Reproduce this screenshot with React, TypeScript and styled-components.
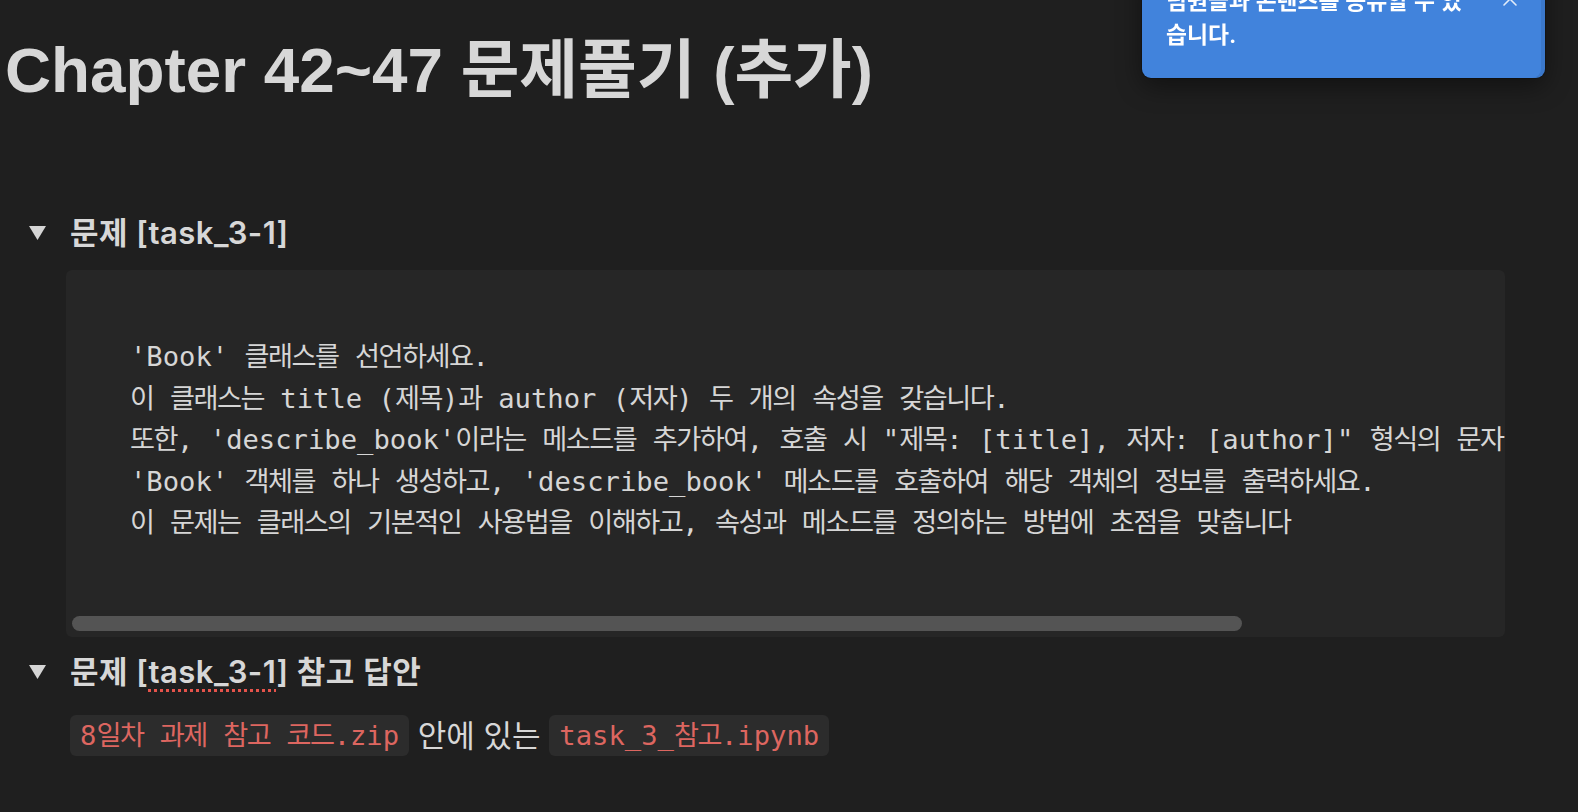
import React from "react";
import styled, { createGlobalStyle } from "styled-components";

const GlobalStyle = createGlobalStyle`
  html, body {
    margin: 0;
    padding: 0;
    background: #1f1f1f;
  }
  body {
    width: 1578px;
    height: 812px;
    overflow: hidden;
    font-family: Inter, "Noto Sans CJK KR", sans-serif;
    color: #d5d5d5;
  }
`;

const Page = styled.main`
  position: relative;
  box-sizing: border-box;
  height: 812px;
  padding: 33px 0 0 5px;
`;

const Title = styled.h1`
  margin: 0;
  font-family: "Liberation Sans", "Noto Sans CJK KR", sans-serif;
  font-weight: 700;
  font-size: 63.8px;
  line-height: 74px;
  color: #d7d7d7;
  white-space: nowrap;
`;

const Toggle = styled.section<{ $gap: number }>`
  margin-top: ${(p) => p.$gap}px;
`;

const ToggleHeader = styled.div`
  display: flex;
  align-items: center;
  height: 38px;
  padding-left: 23px;
`;

const Caret = styled.span`
  width: 42px;
  display: flex;
  align-items: center;
  color: #d5d5d5;
`;

const HeadingText = styled.h3`
  margin: 0;
  font-size: 31px;
  font-weight: 600;
  letter-spacing: 0.5px;
  line-height: 38px;
  color: #d7d7d7;
  white-space: nowrap;
`;

const Misspelled = styled.span`
  text-decoration: underline dotted #e5534b;
  text-decoration-thickness: 2.5px;
  text-underline-offset: 6px;
`;

const ToggleBody = styled.div<{ $top: number }>`
  padding-left: 61px;
  margin-top: ${(p) => p.$top}px;
`;

const CodeBlock = styled.div`
  width: 1439px;
  background: #262626;
  border-radius: 6px;
  overflow: hidden;
`;

const CodeScroll = styled.pre`
  margin: 0;
  padding: 66px 0 0 64px;
  font-family: "DejaVu Sans Mono", "Noto Sans CJK KR", monospace;
  font-size: 27.2px;
  line-height: 41.5px;
  white-space: pre;
  overflow: hidden;
  color: #d6d6d6;
`;

const Hangul = styled.span`
  letter-spacing: -1.5px;
`;

const ScrollTrack = styled.div`
  padding: 72px 6px 6px 6px;
`;

const ScrollThumb = styled.div`
  width: 1170px;
  height: 15px;
  border-radius: 8px;
  background: #545454;
`;

const Para = styled.p`
  margin: 24px 0 0;
  padding-left: 4px;
  display: flex;
  align-items: center;
  font-size: 31px;
  line-height: 41px;
  white-space: pre;
  color: #d7d7d7;
`;

const InlineCode = styled.code`
  display: inline-block;
  height: 41px;
  padding: 0 10px;
  border-radius: 6px;
  background: #2c2c2c;
  color: #dd6660;
  font-family: "DejaVu Sans Mono", "Noto Sans CJK KR", monospace;
  font-size: 27.2px;
  line-height: 41px;
`;

const Toast = styled.div`
  position: fixed;
  top: -36px;
  left: 1142px;
  width: 403px;
  box-sizing: border-box;
  padding: 20px 74px 26px 24px;
  background: #4183dc;
  border-radius: 9px;
  color: #ffffff;
  font-family: Inter, "Noto Sans CJK KR", sans-serif;
  font-size: 22.8px;
  font-weight: 600;
  line-height: 34px;
  box-shadow: inset -4px 0 0 rgba(0, 0, 0, 0.08), 0 0 0 1px rgba(0, 0, 0, 0.2),
    0 8px 26px rgba(0, 0, 0, 0.45);
`;

const ToastClose = styled.span`
  position: absolute;
  top: 27px;
  left: 360px;
  width: 16px;
  height: 16px;
  display: flex;
  opacity: 0.85;
`;

const codeLines = [
  "'Book' 클래스를 선언하세요.",
  "이 클래스는 title (제목)과 author (저자) 두 개의 속성을 갖습니다.",
  "또한, 'describe_book'이라는 메소드를 추가하여, 호출 시 \"제목: [title], 저자: [author]\" 형식의 문자열을 반환하도록 하세요.",
  "'Book' 객체를 하나 생성하고, 'describe_book' 메소드를 호출하여 해당 객체의 정보를 출력하세요.",
  "이 문제는 클래스의 기본적인 사용법을 이해하고, 속성과 메소드를 정의하는 방법에 초점을 맞춥니다",
];

const HANGUL = /([\uAC00-\uD7A3\u3131-\u318E]+)/;

function mono(text: string) {
  const parts = text.split(HANGUL);
  return parts.map((part, i) =>
    i % 2 === 1 ? (
      <Hangul key={i}>{part}</Hangul>
    ) : (
      <React.Fragment key={i}>{part}</React.Fragment>
    )
  );
}

function TriangleDown() {
  return (
    <svg width="19" height="16" viewBox="0 0 19 16">
      <polygon points="1,1 18,1 9.5,15" fill="#d5d5d5" />
    </svg>
  );
}

function CloseIcon() {
  return (
    <svg width="16" height="16" viewBox="0 0 16 16">
      <path d="M2 2 L14 14 M14 2 L2 14" stroke="#ffffff" strokeWidth="1.6" strokeLinecap="round" />
    </svg>
  );
}

export default function App() {
  return (
    <>
      <GlobalStyle />
      <Page>
        <Title>Chapter 42~47 문제풀기 (추가)</Title>

        <Toggle $gap={107}>
          <ToggleHeader>
            <Caret>
              <TriangleDown />
            </Caret>
            <HeadingText>문제 [task_3-1]</HeadingText>
          </ToggleHeader>
          <ToggleBody $top={18}>
            <CodeBlock>
              <CodeScroll>
                {codeLines.map((line, i) => (
                  <React.Fragment key={i}>
                    {mono(line)}
                    {i < codeLines.length - 1 ? "\n" : ""}
                  </React.Fragment>
                ))}
              </CodeScroll>
              <ScrollTrack>
                <ScrollThumb />
              </ScrollTrack>
            </CodeBlock>
          </ToggleBody>
        </Toggle>

        <Toggle $gap={16}>
          <ToggleHeader>
            <Caret>
              <TriangleDown />
            </Caret>
            <HeadingText>
              문제 [<Misspelled>task_3-1</Misspelled>] 참고 답안
            </HeadingText>
          </ToggleHeader>
          <ToggleBody $top={0}>
            <Para>
              <InlineCode>{mono("8일차 과제 참고 코드.zip")}</InlineCode>
              {" 안에 있는 "}
              <InlineCode>{mono("task_3_참고.ipynb")}</InlineCode>
            </Para>
          </ToggleBody>
        </Toggle>

        <Toast>
          팀원들과 콘텐츠를 공유할 수 있습니다.
          <ToastClose>
            <CloseIcon />
          </ToastClose>
        </Toast>
      </Page>
    </>
  );
}
